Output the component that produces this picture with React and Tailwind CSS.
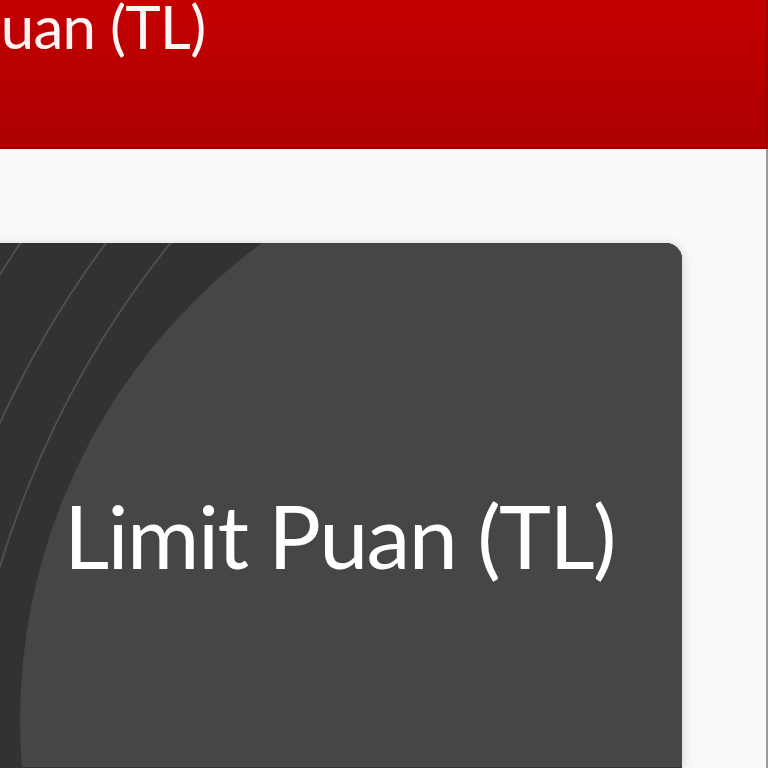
export default function App() {
  return (
    <div className="w-[768px] h-[768px] overflow-hidden bg-[#f9f9f9] flex flex-col" style={{ fontFamily: 'Lato, sans-serif' }}>
      <div className="h-[149px] shrink-0 bg-gradient-to-b from-[#c40000] to-[#ac0000] border-b-2 border-[#8e0000] flex border-r-2 border-r-[#a00000] overflow-hidden">
        <div className="ml-[-176px] mt-[-4px] text-[60px] leading-none tracking-[-0.7px] text-[#fff4f4] whitespace-nowrap">Limit Puan (TL)</div>
      </div>
      <div className="flex-1 flex border-r-2 border-r-[#999999] pt-[94px] pr-[84px]">
        <div className="relative ml-[-20px] flex-1 rounded-tr-[16px] bg-[#323232] overflow-hidden shadow-[2px_0_10px_rgba(0,0,0,0.12)]">
          <svg className="absolute inset-0" width="702" height="524" viewBox="0 0 702 524">
            <circle cx="938" cy="601" r="959" fill="none" stroke="#505050" strokeWidth="1.8" />
            <circle cx="938" cy="601" r="1010" fill="none" stroke="#505050" strokeWidth="1.8" />
            <circle cx="938" cy="601" r="1080" fill="none" stroke="#505050" strokeWidth="1.8" />
            <circle cx="633" cy="478" r="593" fill="#464646" />
          </svg>
          <div className="relative pl-[84px] pt-[248px] text-[88px] leading-none tracking-[-1.6px] text-white whitespace-nowrap">Limit Puan (TL)</div>
        </div>
      </div>
    </div>
  );
}
